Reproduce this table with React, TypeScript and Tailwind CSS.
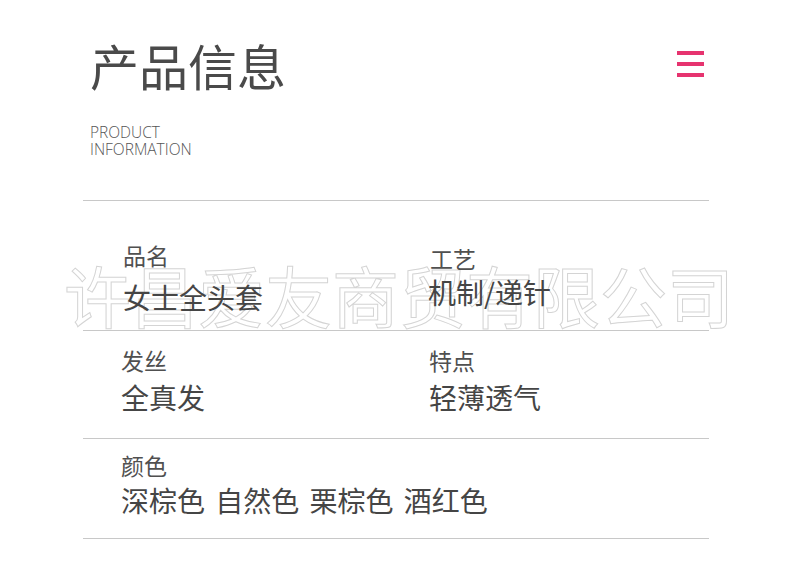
import React from "react";

const cjk = "font-['Noto_Sans_CJK_SC','Noto_Sans',sans-serif]";

function Field({ label, value, gap }: { label: string; value: string; gap: string }) {
  return (
    <div className="flex flex-col">
      <div className={`${cjk} text-[23px] leading-[23px] text-[#505050]`}>{label}</div>
      <div className={`${cjk} ${gap} text-[28px] leading-[28px] text-[#454545] whitespace-pre [word-spacing:4px]`}>{value}</div>
    </div>
  );
}

export default function App() {
  return (
    <div className="relative w-[790px] h-[579px] overflow-hidden bg-white">
      {/* watermark */}
      <div
        className={`${cjk} absolute left-[64px] top-[260px] text-[67px] leading-[67px] whitespace-nowrap text-transparent [-webkit-text-stroke:1px_#d4d4d4] select-none`}
      >
        许昌爱友商贸有限公司
      </div>

      <div className="relative flex flex-col">
        {/* header */}
        <div className="flex justify-between pl-[90px] pr-[86px] pt-[40px]">
          <div className="flex flex-col">
            <div className={`${cjk} text-[49px] leading-[49px] text-[#4a4a4a]`}>产品信息</div>
            <div className="mt-[35px] font-['Open_Sans',sans-serif] font-light text-[15.5px] leading-[17px] text-[#555555]">
              <div>PRODUCT</div>
              <div>INFORMATION</div>
            </div>
          </div>
          <div className="flex flex-col gap-[7px] pt-[11px]">
            <div className="w-[27px] h-[4px] bg-[#e6336f]" />
            <div className="w-[27px] h-[4px] bg-[#e6336f]" />
            <div className="w-[27px] h-[4px] bg-[#e6336f]" />
          </div>
        </div>

        {/* table */}
        <div className="ml-[83px] w-[626px] mt-[42px] border-t border-[#c8c8c8] flex flex-col">
          <div className="h-[130px] border-b border-[#c8c8c8] grid grid-cols-[345px_1fr]">
            <div className="pt-[43px] pl-[40px]">
              <Field label="品名" value="女士全头套" gap="mt-[16px]" />
            </div>
            <div className="pt-[46px]">
              <div className="flex flex-col">
                <div className={`${cjk} pl-[2px] text-[23px] leading-[23px] text-[#505050]`}>工艺</div>
                <div className={`${cjk} mt-[8px] text-[28px] leading-[28px] text-[#454545]`}>机制/递针</div>
              </div>
            </div>
          </div>
          <div className="h-[108px] border-b border-[#c8c8c8] grid grid-cols-[345px_1fr] pt-[18px]">
            <div className="pl-[38px]">
              <Field label="发丝" value="全真发" gap="mt-[11px]" />
            </div>
            <div className="pl-[1px]">
              <Field label="特点" value="轻薄透气" gap="mt-[11px]" />
            </div>
          </div>
          <div className="h-[100px] border-b border-[#c8c8c8] pl-[38px] pt-[15px]">
            <Field label="颜色" value="深棕色 自然色 栗棕色 酒红色" gap="mt-[9px]" />
          </div>
        </div>
      </div>
    </div>
  );
}
